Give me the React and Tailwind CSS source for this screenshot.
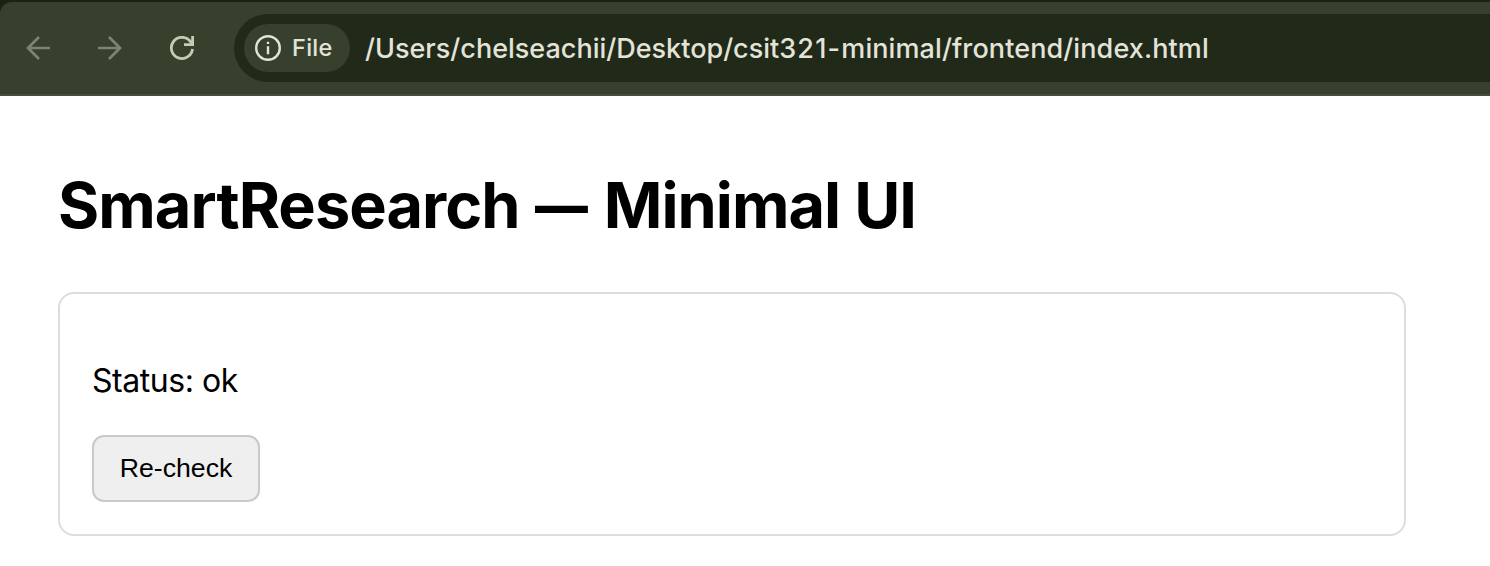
function BackIcon() {
  return (
    <svg className="size-6" viewBox="0 0 24 24" fill="none" stroke="#7c8572" strokeWidth="2.7">
      <path d="M24 12H2M13 1 2 12l11 11" />
    </svg>
  );
}

function ForwardIcon() {
  return (
    <svg className="size-6" viewBox="0 0 24 24" fill="none" stroke="#7c8572" strokeWidth="2.7">
      <path d="M0 12h22M11 1l11 11-11 11" />
    </svg>
  );
}

function ReloadIcon() {
  return (
    <svg className="size-6" viewBox="0 0 24 24" fill="none" stroke="#c3ccb3" strokeWidth="2.8">
      <path d="M22.5 13A10.6 10.6 0 1 1 20 5l2.5 3" />
      <path d="M22.6 0v8.6H14" />
    </svg>
  );
}

function InfoIcon() {
  return (
    <svg className="size-[26px]" viewBox="0 0 26 26" fill="none" stroke="#e3e4d9" strokeWidth="2.4">
      <circle cx="13" cy="13" r="11.8" />
      <path d="M13 11.3v8M13 6.7v2.4" />
    </svg>
  );
}

function Toolbar() {
  return (
    <header className="h-24 bg-[#1a2310] pt-0.5">
      <div className="flex h-[94px] items-center rounded-tl-xl border-b-2 border-[#494a40] bg-[#373f2d] pl-[26px]">
        <nav className="flex gap-12">
          <button aria-label="Back"><BackIcon /></button>
          <button aria-label="Forward"><ForwardIcon /></button>
          <button aria-label="Reload"><ReloadIcon /></button>
        </nav>
        <div className="ml-10 flex h-[68px] flex-1 items-center rounded-l-full bg-[#212919] pl-2.5 text-[#e3e4d9]">
          <div className="flex h-12 w-[106px] items-center rounded-full bg-[#373f2d] pl-[11px]">
            <InfoIcon />
            <span className="ml-[11px] text-[23.5px] leading-none font-medium tracking-[0.3px]">File</span>
          </div>
          <span className="ml-[15px] text-[27px] leading-none font-medium whitespace-nowrap">
            /Users/chelseachii/Desktop/csit<span className="tracking-[1.2px]">321-</span>
            <span className="tracking-[0.1px]">minimal/frontend/index.html</span>
          </span>
        </div>
      </div>
    </header>
  );
}

export default function App() {
  return (
    <div className="h-[566px] overflow-hidden bg-white font-['Inter',sans-serif] text-black">
      <Toolbar />
      <main className="pt-[70px] pr-[84px] pl-[58px]">
        <h1 className="h-[78px] text-[63px] leading-[78px] font-bold tracking-[-0.95px] whitespace-nowrap">
          SmartResearch <span className="-mr-[7px] ml-px inline-block origin-left scale-x-[0.84]">—</span> Minimal UI
        </h1>
        <section className="mt-12 h-[244px] rounded-2xl border-2 border-[#dddddd] px-8 pt-[67px]">
          <p className="h-10 text-[32px] leading-10 tracking-[-0.45px]">Status: ok</p>
          <button className="mt-[34px] block h-[67px] w-[168px] rounded-xl border-2 border-[#c9c9c9] bg-[#efefef] pb-0.5 font-['Liberation_Sans',Arial,sans-serif] text-[26.67px]">
            Re-check
          </button>
        </section>
      </main>
    </div>
  );
}
